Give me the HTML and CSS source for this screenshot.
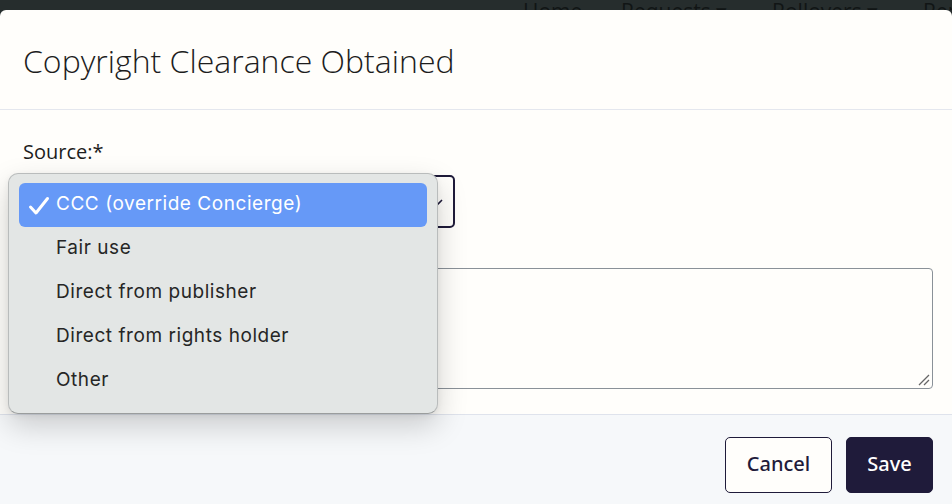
FILE: index.html
```html
<!DOCTYPE html>
<html>
<head>
<meta charset="utf-8">
<link rel="stylesheet" href="styles.css">
</head>
<body>
<nav class="navbar">
  <span class="nav-item home">Home</span>
  <span class="nav-item req">Requests ▾</span>
  <span class="nav-item roll">Rollovers ▾</span>
  <span class="nav-item">Reports</span>
</nav>
<div class="modal">
  <header class="modal-header">
    <h1 class="modal-title">Copyright Clearance Obtained</h1>
  </header>
  <div class="modal-body">
    <label class="field-label">Source:*</label>
    <div class="select">
      <span class="select-text">CCC (override Concierge)</span>
      <svg class="chev" width="14" height="14" viewBox="0 0 14 14"><path d="M1 4 L7 10 L13 4" fill="none" stroke="#1f1b3a" stroke-width="1.6"/></svg>
    </div>
    <label class="field-label second">Notes:</label>
    <div class="textarea">
      <svg class="grip" width="12" height="12" viewBox="0 0 12 12"><path d="M1 11 L11 1 M6 11 L11 6" stroke="#666" stroke-width="1.3"/></svg>
    </div>
    <div class="dropdown">
      <div class="opt selected">
        <svg class="check" width="22" height="20" viewBox="0 0 22 20"><path d="M2.5 11 L8 17 L19.5 2.5" fill="none" stroke="#fff" stroke-width="3" stroke-linecap="round" stroke-linejoin="round"/></svg>
        <span>CCC (override Concierge)</span>
      </div>
      <div class="opt"><span>Fair use</span></div>
      <div class="opt"><span>Direct from publisher</span></div>
      <div class="opt"><span>Direct from rights holder</span></div>
      <div class="opt"><span>Other</span></div>
    </div>
  </div>
  <footer class="modal-footer">
    <button class="btn btn-cancel">Cancel</button>
    <button class="btn btn-save">Save</button>
  </footer>
</div>
</body>
</html>
```
FILE: styles.css
```css
html, body {
  margin: 0;
  padding: 0;
  background: #262d2d;
  height: 504px;
  overflow: hidden;
}
.navbar {
  height: 10px;
  overflow: hidden;
  display: flex;
  padding-left: 523px;
  font-family: "Open Sans", sans-serif;
  font-size: 21px;
  line-height: 24px;
  color: #111515;
}
.nav-item {
  display: block;
  flex-shrink: 0;
  margin-top: -1px;
  white-space: nowrap;
}
.nav-item.home { width: 98px; }
.nav-item.req { width: 151px; }
.nav-item.roll { width: 151px; }

.modal {
  background: #fffefb;
  border-radius: 6px 6px 0 0;
  height: 494px;
  display: flex;
  flex-direction: column;
}
.modal-header {
  height: 100px;
  box-sizing: border-box;
  border-bottom: 1px solid #e4e7ee;
  display: flex;
  align-items: center;
  padding: 0 23px;
}
.modal-title {
  margin: 0;
  font-family: "Open Sans", sans-serif;
  font-weight: 300;
  font-size: 32px;
  color: #1d1d1d;
  padding-top: 2px;
}
.modal-body {
  position: relative;
  flex: 1;
  padding: 28px 19px 0 23px;
  display: flex;
  flex-direction: column;
}
.field-label {
  font-family: "Open Sans", sans-serif;
  font-size: 20px;
  line-height: 27px;
  color: #1d1d1d;
}
.select {
  margin-top: 10px;
  width: 432px;
  height: 53px;
  box-sizing: border-box;
  border: 2px solid #1f1b3a;
  border-radius: 5px;
  display: flex;
  align-items: center;
  justify-content: space-between;
  padding: 0 10px 0 14px;
  font-family: "Open Sans", sans-serif;
  font-size: 18px;
}
.chev { margin-top: 2px; }
.field-label.second {
  margin-top: 8px;
  height: 32px;
}
.textarea {
  position: relative;
  height: 121px;
  box-sizing: border-box;
  border: 1px solid #8a9198;
  border-radius: 4px;
}
.grip {
  position: absolute;
  right: 2px;
  bottom: 2px;
}
.dropdown {
  position: absolute;
  left: 8px;
  top: 63px;
  width: 430px;
  box-sizing: border-box;
  padding: 9px 10px 10px;
  background: #e3e6e5;
  border: 1px solid #b9bcbc;
  border-bottom-color: #9a9d9d;
  border-radius: 10px;
  box-shadow: 0 12px 30px rgba(0, 0, 0, 0.18), 0 2px 6px rgba(0, 0, 0, 0.06);
  font-family: Inter, "Noto Sans", sans-serif;
  font-size: 19px;
  color: #262626;
}
.opt {
  height: 44px;
  display: flex;
  align-items: center;
  padding-left: 37px;
  border-radius: 6px;
  position: relative;
  letter-spacing: 0.55px;
}
.opt span { margin-top: -3px; }
.opt.selected {
  background: #6699f7;
  color: #fff;
}
.check {
  position: absolute;
  left: 9px;
  top: 13px;
}
.modal-footer {
  height: 90px;
  box-sizing: border-box;
  background: #f6f8fa;
  border-top: 1px solid #dfe3ec;
  display: flex;
  justify-content: flex-end;
  align-items: flex-start;
  gap: 14px;
  padding: 22px 19px 0 0;
}
.btn {
  height: 56px;
  border-radius: 5px;
  font-family: "Noto Sans", sans-serif;
  font-weight: 500;
  font-size: 20px;
  padding: 0 0 3px;
  cursor: pointer;
}
.btn-cancel {
  width: 107px;
  background: #fffefb;
  color: #1f1b3a;
  border: 1px solid #1f1b3a;
}
.btn-save {
  width: 87px;
  background: #1f1b3a;
  color: #fff;
  border: 1px solid #1f1b3a;
}
```
